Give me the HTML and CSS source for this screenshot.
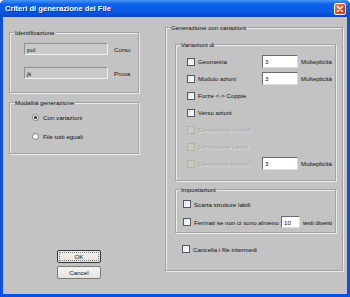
FILE: index.html
```html
<!DOCTYPE html>
<html lang="it">
<head>
  <meta charset="UTF-8" />
  <title>Criteri di generazione dei File</title>
  <link rel="stylesheet" href="styles.css">
</head>
<body>

<div class="window">
  <div class="titlebar">
    <span class="title">Criteri di generazione dei File</span>
    <span class="close">
      <svg width="8" height="8" viewBox="0 0 8 8"><path d="M1.5 1.5l5 5M6.5 1.5l-5 5" stroke="#fff" stroke-width="1.4" stroke-linecap="round"/></svg>
    </span>
  </div>

  <div class="client">
    <!-- LEFT -->
    <div class="left">
      <div class="group ident">
        <span class="legend">Identificazione</span>
        <div class="field-row"><span class="edit ro">pol</span><span>Corso</span></div>
        <div class="field-row"><span class="edit ro">jk</span><span>Prova</span></div>
      </div>

      <div class="group mode">
        <span class="legend">Modalità generazione</span>
        <div class="opt"><span class="radio on"></span>Con variazioni</div>
        <div class="opt"><span class="radio"></span>File tutti eguali</div>
      </div>

      <div class="buttons">
        <button class="btn default">OK</button>
        <button class="btn">Cancel</button>
      </div>
    </div>

    <!-- RIGHT -->
    <div class="right">
      <div class="group gen">
        <span class="legend">Generazione con variazioni</span>

        <div class="group vars">
          <span class="legend">Variazioni di</span>
          <div class="vrow"><span class="opt"><span class="chk"></span>Geometria</span><span class="edit">3</span><span>Molteplicità</span></div>
          <div class="vrow"><span class="opt"><span class="chk"></span>Modulo azioni</span><span class="edit">3</span><span>Molteplicità</span></div>
          <div class="vrow"><span class="opt"><span class="chk"></span>Forze &lt;-&gt; Coppie</span></div>
          <div class="vrow"><span class="opt"><span class="chk"></span>Verso azioni</span></div>
          <div class="vrow"><span class="opt off"><span class="chk"></span>Dimensione cordoli</span></div>
          <div class="vrow"><span class="opt off"><span class="chk"></span>Dimensione pareti</span></div>
          <div class="vrow"><span class="opt off"><span class="chk"></span>Dimensioni sezioni</span><span class="edit">3</span><span>Molteplicità</span></div>
        </div>

        <div class="group imp">
          <span class="legend">Impostazioni</span>
          <div class="irow"><span class="opt"><span class="chk"></span>Scarta strutture labili</span></div>
          <div class="irow"><span class="opt"><span class="chk"></span>Fermati se non ci sono almeno</span><span class="edit">10</span><span class="tight">testi diversi</span></div>
        </div>

        <div class="opt last"><span class="chk"></span>Cancella i file intermedi</div>
      </div>
    </div>
  </div>
</div>

</body>
</html>
```

FILE: styles.css
```css
*{box-sizing:border-box}

body {
  margin:0;
  font-family:'Liberation Sans',Arial,sans-serif;
  font-size:6.2px;
  color:#111;
  white-space:nowrap;
}

.window {
  width:350px;
  height:297px;
  display:flex;
  flex-direction:column;
  background:#0b4fdc;
  border-radius:5px 5px 0 0;
  overflow:hidden;
}

.titlebar {
  flex:none;
  height:17px;
  display:flex;
  align-items:center;
  justify-content:space-between;
  padding:0 4px 0 5px;
  background:linear-gradient(#4a96f8,#0c62ea 25%,#0a58e2 70%,#0846cc);
}

.title {
  color:#fff;
  font-weight:700;
  font-size:7.6px;
  text-shadow:1px 1px 0 #0a2f95;
}

.close {
  width:12px;height:12px;
  display:flex;align-items:center;justify-content:center;
  border:1px solid #fff;
  border-radius:2px;
  background:linear-gradient(135deg,#f08a62,#d9441c 60%,#c23a16);
}

.client {
  flex:1;
  margin:0 3px 3px;
  background:#c3c3c3;
  display:flex;
  gap:26px;
  padding:10px 0 0 6px;
}

/* group boxes */
.group {
  position:relative;
  border:1px solid #a2a2a2;
  box-shadow:inset 1px 1px 0 #ececec,1px 1px 0 #ececec;
}

.legend {
  position:absolute;
  top:-4px;
  left:4px;
  padding:0 1px;
  line-height:7px;
  background:#c3c3c3;
}

/* left column */
.left {width:130px;display:flex;flex-direction:column;padding-top:5px}

.ident {
  height:61px;
  display:flex;flex-direction:column;gap:12px;
  padding:10px 0 0 14px;
}

.field-row {display:flex;align-items:center;gap:6px}

.edit {
  height:13px;
  display:flex;align-items:center;
  padding:0 2px;
  background:#fff;
  border:1px solid;
  border-color:#6a6a6a #dcdcdc #dcdcdc #6a6a6a;
}

.edit.ro {
  width:84px;
  height:12px;
  background:#c9c9c9;
  border-color:#909090 #f0f0f0 #f0f0f0 #909090;
}

.mode {
  margin-top:9px;
  height:52px;
  display:flex;flex-direction:column;gap:10px;
  padding:10px 0 0 22px;
}

.opt {display:flex;align-items:center;height:9px}

.radio {
  width:7px;height:7px;
  margin-right:4px;
  border-radius:50%;
  border:1px solid #7a7a7a;
  background:#fff;
  display:flex;align-items:center;justify-content:center;
}

.radio.on::after {
  content:'';
  width:3px;height:3px;
  border-radius:50%;
  background:#222;
}

.buttons {
  margin:96px 0 0 48px;
  display:flex;flex-direction:column;gap:3px;
}

.btn {
  width:44px;height:13px;
  padding:0;
  font:inherit;
  color:#111;
  background:linear-gradient(#f4f3ee,#e6e4da);
  border:1px solid #7d7d7d;
  border-radius:2px;
}

.btn.default {
  border-color:#333;
  outline:1px dotted #777;
  outline-offset:-3px;
}

/* right column */
.right {width:178px}

.gen {
  height:244px;
  padding:16px 6px 0 9px;
}

.vars {
  height:137px;
  display:flex;flex-direction:column;gap:4px;
  padding:10px 0 0 11px;
}

.vrow {
  height:13px;
  display:grid;
  grid-template-columns:72px 36px auto;
  column-gap:3px;
  align-items:center;
}

.chk {
  flex:none;
  width:8px;height:8px;
  margin-right:3px;
  border:1px solid #4d5a6a;
  background:linear-gradient(135deg,#e4e4e0,#fff);
}

.opt.off {color:#a4a4a4;text-shadow:1px 1px 0 #e2e2e2}
.opt.off .chk {border-color:#b2b2aa;background:#cbc9bf}

.imp {
  margin-top:8px;
  height:44px;
  display:flex;flex-direction:column;gap:6px;
  padding:8px 0 0 7px;
}

.irow {
  height:12px;
  display:grid;
  grid-template-columns:95px 19px auto;
  column-gap:3px;
  align-items:center;
}

.irow .edit {height:12px}
.tight {letter-spacing:-.15px}

.last {margin:10px 0 0 7px;height:12px}
```
